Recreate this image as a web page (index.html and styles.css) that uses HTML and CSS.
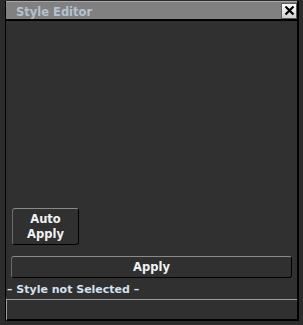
FILE: index.html
```html
<!DOCTYPE html>
<html>
<head>
<meta charset="utf-8">
<link rel="stylesheet" href="styles.css">
</head>
<body>
<div class="window">
  <div class="titlebar">
    <span class="title">Style Editor</span>
    <span class="close">
      <svg width="13" height="13" viewBox="0 0 13 13"><path d="M2.5 2.5 L10.5 10.5 M10.5 2.5 L2.5 10.5" stroke="#000" stroke-width="2.2" fill="none"/></svg>
    </span>
  </div>
  <div class="content">
    <div class="spacer"></div>
    <button class="btn auto">Auto<br>Apply</button>
    <button class="btn apply">Apply</button>
    <div class="label">– Style not Selected –</div>
    <div class="field"></div>
  </div>
</div>
</body>
</html>
```
FILE: styles.css
```css
html, body {
  margin: 0;
  padding: 0;
  background: #2c2c2c;
  width: 303px;
  height: 325px;
  overflow: hidden;
  font-family: "DejaVu Sans", "Liberation Sans", sans-serif;
}
.window {
  margin: 1px 0 0 5px;
  width: 291px;
  height: 320px;
  border-left: 1px solid #000;
  border-right: 2px solid #000;
  background: #303030;
  display: flex;
  flex-direction: column;
}
.titlebar {
  height: 17px;
  border-top: 1px solid #a6a6a6;
  border-bottom: 2px solid #000;
  background: #808080;
  display: flex;
  align-items: center;
  justify-content: space-between;
  padding-left: 10px;
}
.title {
  font-size: 11.5px;
  font-weight: bold;
  color: #b4c2d2;
  padding-top: 2px;
}
.close {
  width: 14px;
  height: 14px;
  background: linear-gradient(#ffffff, #d0d0d0);
  border: 1px solid #5a5a5a;
  display: flex;
  align-items: center;
  justify-content: center;
}
.close svg { display: block; }
.content {
  flex: 1;
  display: flex;
  flex-direction: column;
}
.spacer { flex: 1; }
.btn {
  font-family: inherit;
  font-size: 11.5px;
  font-weight: bold;
  color: #f2f2f2;
  background: #303030;
  border-radius: 3px;
  border: 1px solid #000;
  border-top-color: #8a8a8a;
  border-left-color: #6a6a6a;
  padding: 0;
  line-height: 15px;
}
.auto {
  align-self: flex-start;
  margin-left: 6px;
  width: 67px;
  height: 37px;
}
.apply {
  margin: 11px 5px 0 5px;
  height: 22px;
}
.label {
  font-size: 11px;
  font-weight: bold;
  color: #d4e0ee;
  margin: 5px 0 0 1px;
  line-height: 14px;
}
.field {
  margin-top: 2px;
  height: 19px;
  border-top: 1px solid #9c9c9c;
  border-left: 1px solid #9c9c9c;
  border-bottom: 2px solid #000;
  background: #303030;
}
```
